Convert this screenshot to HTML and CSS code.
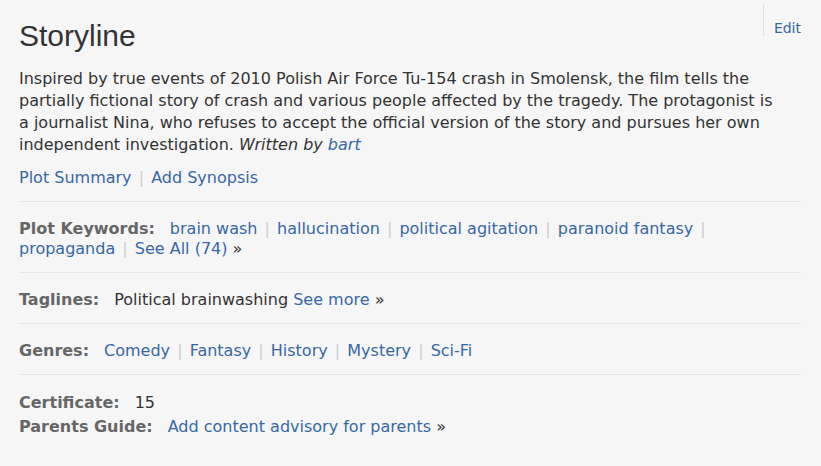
FILE: index.html
```html
<!DOCTYPE html>
<html lang="en">
<head>
    <meta charset="UTF-8">
    <meta name="viewport" content="width=device-width, initial-scale=1.0">
    <title>Storyline</title>
    <link rel="stylesheet" href="styles.css">
</head>
<body>
    <div class="article">
        <div class="article-head">
            <h2>Storyline</h2>
            <span class="edit"><a href="#">Edit</a></span>
        </div>

        <p class="summary">Inspired by true events of 2010 Polish Air Force Tu-154 crash in Smolensk, the film tells the partially fictional story of crash and various people affected by the tragedy. The protagonist is a journalist Nina, who refuses to accept the official version of the story and pursues her own independent investigation. <em>Written by <a href="#">bart</a></em></p>

        <div class="txt-block see-more">
            <a href="#">Plot Summary</a> <span class="ghost">|</span> <a href="#">Add Synopsis</a>
        </div>

        <div class="txt-block">
            <h4>Plot Keywords:</h4><a href="#">brain wash</a> <span class="ghost">|</span> <a href="#">hallucination</a> <span class="ghost">|</span> <a href="#">political agitation</a> <span class="ghost">|</span> <a href="#">paranoid fantasy</a> <span class="ghost">|</span> <a href="#">propaganda</a> <span class="ghost">|</span> <a href="#">See All (74)</a>&nbsp;&raquo;
        </div>

        <div class="txt-block">
            <h4>Taglines:</h4>Political brainwashing <a href="#">See more</a>&nbsp;&raquo;
        </div>

        <div class="txt-block">
            <h4>Genres:</h4><a href="#">Comedy</a> <span class="ghost">|</span> <a href="#">Fantasy</a> <span class="ghost">|</span> <a href="#">History</a> <span class="ghost">|</span> <a href="#">Mystery</a> <span class="ghost">|</span> <a href="#">Sci-Fi</a>
        </div>

        <div class="txt-block last">
            <div class="line"><h4>Certificate:</h4>15</div>
            <div class="line"><h4>Parents Guide:</h4><a href="#">Add content advisory for parents</a>&nbsp;&raquo;</div>
        </div>
    </div>
</body>
</html>
```

FILE: styles.css
```css
body {
    margin: 0;
    background-color: #f6f6f6;
    color: #333;
    font-family: "DejaVu Sans", Verdana, sans-serif;
    font-size: 16px;
}

a {
    color: #3668a5;
    text-decoration: none;
}

.article {
    padding: 0 20px 0 19px;
}

.article-head {
    display: flex;
    justify-content: space-between;
    align-items: flex-start;
}

.article-head h2 {
    margin: 18px 0 0 0;
    font-family: "Liberation Sans", Arial, sans-serif;
    font-size: 30px;
    font-weight: normal;
    line-height: 36px;
    color: #333;
}

.edit {
    margin-top: 5px;
    height: 31px;
    padding: 15px 0 0 10px;
    box-sizing: border-box;
    border-left: 1px dotted #ccc;
    font-size: 14px;
    line-height: 16px;
}

.summary {
    margin: 14px 22px 0 0;
    line-height: 22px;
}

.txt-block {
    padding: 17px 0 13px 0;
    border-bottom: 1px solid #e6e6e6;
    line-height: 20px;
}

.txt-block.see-more {
    padding-top: 12px;
}

.txt-block.last {
    padding-top: 18px;
    border-bottom: none;
}

.txt-block h4 {
    display: inline;
    margin: 0 15px 0 0;
    font-size: 16px;
    color: #666;
}

.line + .line {
    margin-top: 4px;
}

.ghost {
    color: #ccc;
    padding: 0 2px;
}
```
